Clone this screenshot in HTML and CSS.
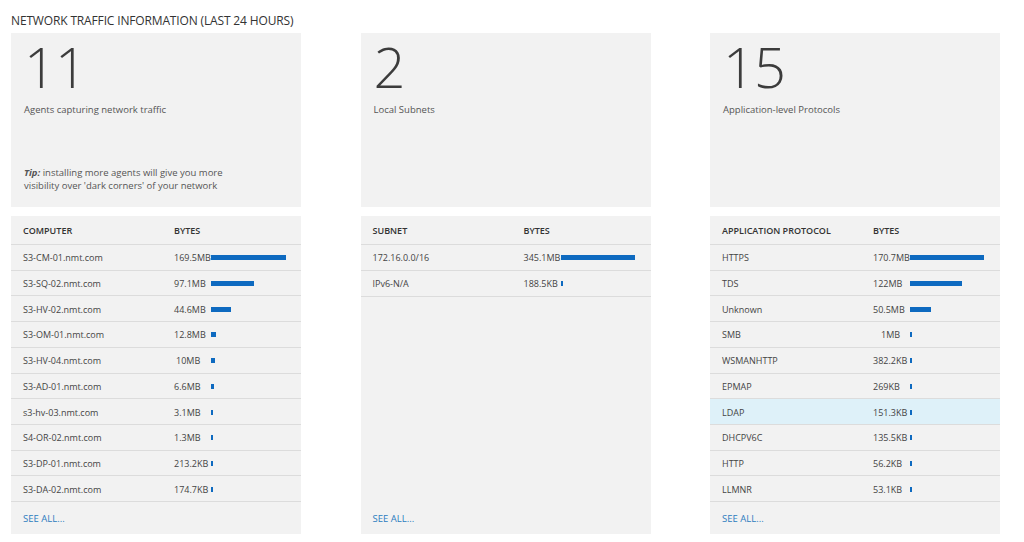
FILE: index.html
```html
<!DOCTYPE html>
<html>
<head>
<meta charset="utf-8">
<link rel="stylesheet" href="styles.css">
</head>
<body>
<h1 class="title">NETWORK TRAFFIC INFORMATION (LAST 24 HOURS)</h1>
<div class="grid">
  <section class="col">
    <div class="summary">
      <div class="big">11</div>
      <div class="label">Agents capturing network traffic</div>
      <div class="tip"><b><i>Tip:</i></b> installing more agents will give you more<br>visibility over 'dark corners' of your network</div>
    </div>
    <div class="table">
      <div class="row head"><span class="c1">COMPUTER</span><span class="c2">BYTES</span></div>
      <div class="row"><span class="c1">S3-CM-01.nmt.com</span><span class="c2"><span class="val">169.5MB</span><i class="bar" style="width:75px"></i></span></div>
      <div class="row"><span class="c1">S3-SQ-02.nmt.com</span><span class="c2"><span class="val">97.1MB</span><i class="bar" style="width:43px"></i></span></div>
      <div class="row"><span class="c1">S3-HV-02.nmt.com</span><span class="c2"><span class="val">44.6MB</span><i class="bar" style="width:20px"></i></span></div>
      <div class="row"><span class="c1">S3-OM-01.nmt.com</span><span class="c2"><span class="val">12.8MB</span><i class="bar" style="width:5px"></i></span></div>
      <div class="row"><span class="c1">S3-HV-04.nmt.com</span><span class="c2"><span class="val short">10MB</span><i class="bar" style="width:4px"></i></span></div>
      <div class="row"><span class="c1">S3-AD-01.nmt.com</span><span class="c2"><span class="val">6.6MB</span><i class="bar" style="width:3px"></i></span></div>
      <div class="row"><span class="c1">s3-hv-03.nmt.com</span><span class="c2"><span class="val">3.1MB</span><i class="bar" style="width:2px"></i></span></div>
      <div class="row"><span class="c1">S4-OR-02.nmt.com</span><span class="c2"><span class="val">1.3MB</span><i class="bar" style="width:2px"></i></span></div>
      <div class="row"><span class="c1">S3-DP-01.nmt.com</span><span class="c2"><span class="val">213.2KB</span><i class="bar" style="width:2px"></i></span></div>
      <div class="row"><span class="c1">S3-DA-02.nmt.com</span><span class="c2"><span class="val">174.7KB</span><i class="bar" style="width:2px"></i></span></div>
      <div class="foot"><a class="seeall">SEE ALL...</a></div>
    </div>
  </section>
  <section class="col">
    <div class="summary">
      <div class="big">2</div>
      <div class="label">Local Subnets</div>
    </div>
    <div class="table">
      <div class="row head"><span class="c1">SUBNET</span><span class="c2">BYTES</span></div>
      <div class="row"><span class="c1">172.16.0.0/16</span><span class="c2"><span class="val">345.1MB</span><i class="bar" style="width:74px"></i></span></div>
      <div class="row"><span class="c1">IPv6-N/A</span><span class="c2"><span class="val">188.5KB</span><i class="bar" style="width:2px"></i></span></div>
      <div class="fill"></div>
      <div class="foot"><a class="seeall">SEE ALL...</a></div>
    </div>
  </section>
  <section class="col">
    <div class="summary">
      <div class="big">15</div>
      <div class="label">Application-level Protocols</div>
    </div>
    <div class="table">
      <div class="row head"><span class="c1">APPLICATION PROTOCOL</span><span class="c2">BYTES</span></div>
      <div class="row"><span class="c1">HTTPS</span><span class="c2"><span class="val">170.7MB</span><i class="bar" style="width:74px"></i></span></div>
      <div class="row"><span class="c1">TDS</span><span class="c2"><span class="val">122MB</span><i class="bar" style="width:52px"></i></span></div>
      <div class="row"><span class="c1">Unknown</span><span class="c2"><span class="val">50.5MB</span><i class="bar" style="width:21px"></i></span></div>
      <div class="row"><span class="c1">SMB</span><span class="c2"><span class="val shorter">1MB</span><i class="bar" style="width:2px"></i></span></div>
      <div class="row"><span class="c1">WSMANHTTP</span><span class="c2"><span class="val">382.2KB</span><i class="bar" style="width:2px"></i></span></div>
      <div class="row"><span class="c1">EPMAP</span><span class="c2"><span class="val">269KB</span><i class="bar" style="width:2px"></i></span></div>
      <div class="row selected"><span class="c1">LDAP</span><span class="c2"><span class="val">151.3KB</span><i class="bar" style="width:2px"></i></span></div>
      <div class="row"><span class="c1">DHCPV6C</span><span class="c2"><span class="val">135.5KB</span><i class="bar" style="width:2px"></i></span></div>
      <div class="row"><span class="c1">HTTP</span><span class="c2"><span class="val">56.2KB</span><i class="bar" style="width:2px"></i></span></div>
      <div class="row"><span class="c1">LLMNR</span><span class="c2"><span class="val">53.1KB</span><i class="bar" style="width:2px"></i></span></div>
      <div class="foot"><a class="seeall">SEE ALL...</a></div>
    </div>
  </section>
</div>
</body>
</html>
```

FILE: styles.css
```css
html, body {
  margin: 0;
  padding: 0;
  background: #ffffff;
}
body {
  font-family: "Open Sans", "Noto Sans", sans-serif;
  color: #444444;
  width: 1024px;
  height: 542px;
  overflow: hidden;
}
.title {
  margin: 0;
  padding: 12px 0 0 11px;
  height: 21px;
  font-size: 12px;
  line-height: 17px;
  font-weight: 400;
  color: #333333;
  letter-spacing: -0.15px;
}
.grid {
  display: flex;
  justify-content: space-between;
  width: 989px;
  margin-left: 11px;
}
.col {
  width: 290px;
  display: flex;
  flex-direction: column;
  gap: 9px;
}
.summary {
  background: #f2f2f2;
  height: 174px;
  box-sizing: border-box;
  padding: 2px 12px 0 13px;
  display: flex;
  flex-direction: column;
}
.big {
  font-size: 56px;
  font-weight: 300;
  line-height: 62px;
  color: #3c3c3c;
  letter-spacing: -1px;
}
.label {
  font-size: 9.5px;
  line-height: 14px;
  margin-top: 6px;
  color: #555555;
}
.tip {
  margin-top: auto;
  margin-bottom: 15px;
  font-size: 9.5px;
  line-height: 13px;
  color: #555555;
}
.tip b {
  font-weight: 700;
}
.table {
  background: #f2f2f2;
  height: 318px;
  display: flex;
  flex-direction: column;
}
.row {
  display: flex;
  align-items: center;
  height: 24.8px;
  border-bottom: 1px solid #dcdcdc;
  font-size: 9px;
  color: #444444;
}
.row.head {
  height: 28px;
  font-weight: 600;
  font-size: 9px;
  color: #333333;
}
.row.selected {
  background: #def1f9;
}
.c1 {
  width: 151px;
  padding-left: 12px;
  padding-top: 1px;
}
.c2 {
  display: flex;
  align-items: center;
  padding-top: 1px;
}
.val {
  width: 37px;
}
.val.short {
  padding-left: 2px;
  width: 35px;
}
.val.shorter {
  padding-left: 8px;
  width: 29px;
}
.bar {
  display: block;
  height: 5px;
  background: #0e6ac0;
}
.fill {
  flex: 1;
}
.foot {
  margin-top: auto;
  height: 32px;
  display: flex;
  align-items: center;
  padding-left: 12px;
}
.seeall {
  font-size: 9.5px;
  color: #2b7cbf;
  cursor: pointer;
}
```
